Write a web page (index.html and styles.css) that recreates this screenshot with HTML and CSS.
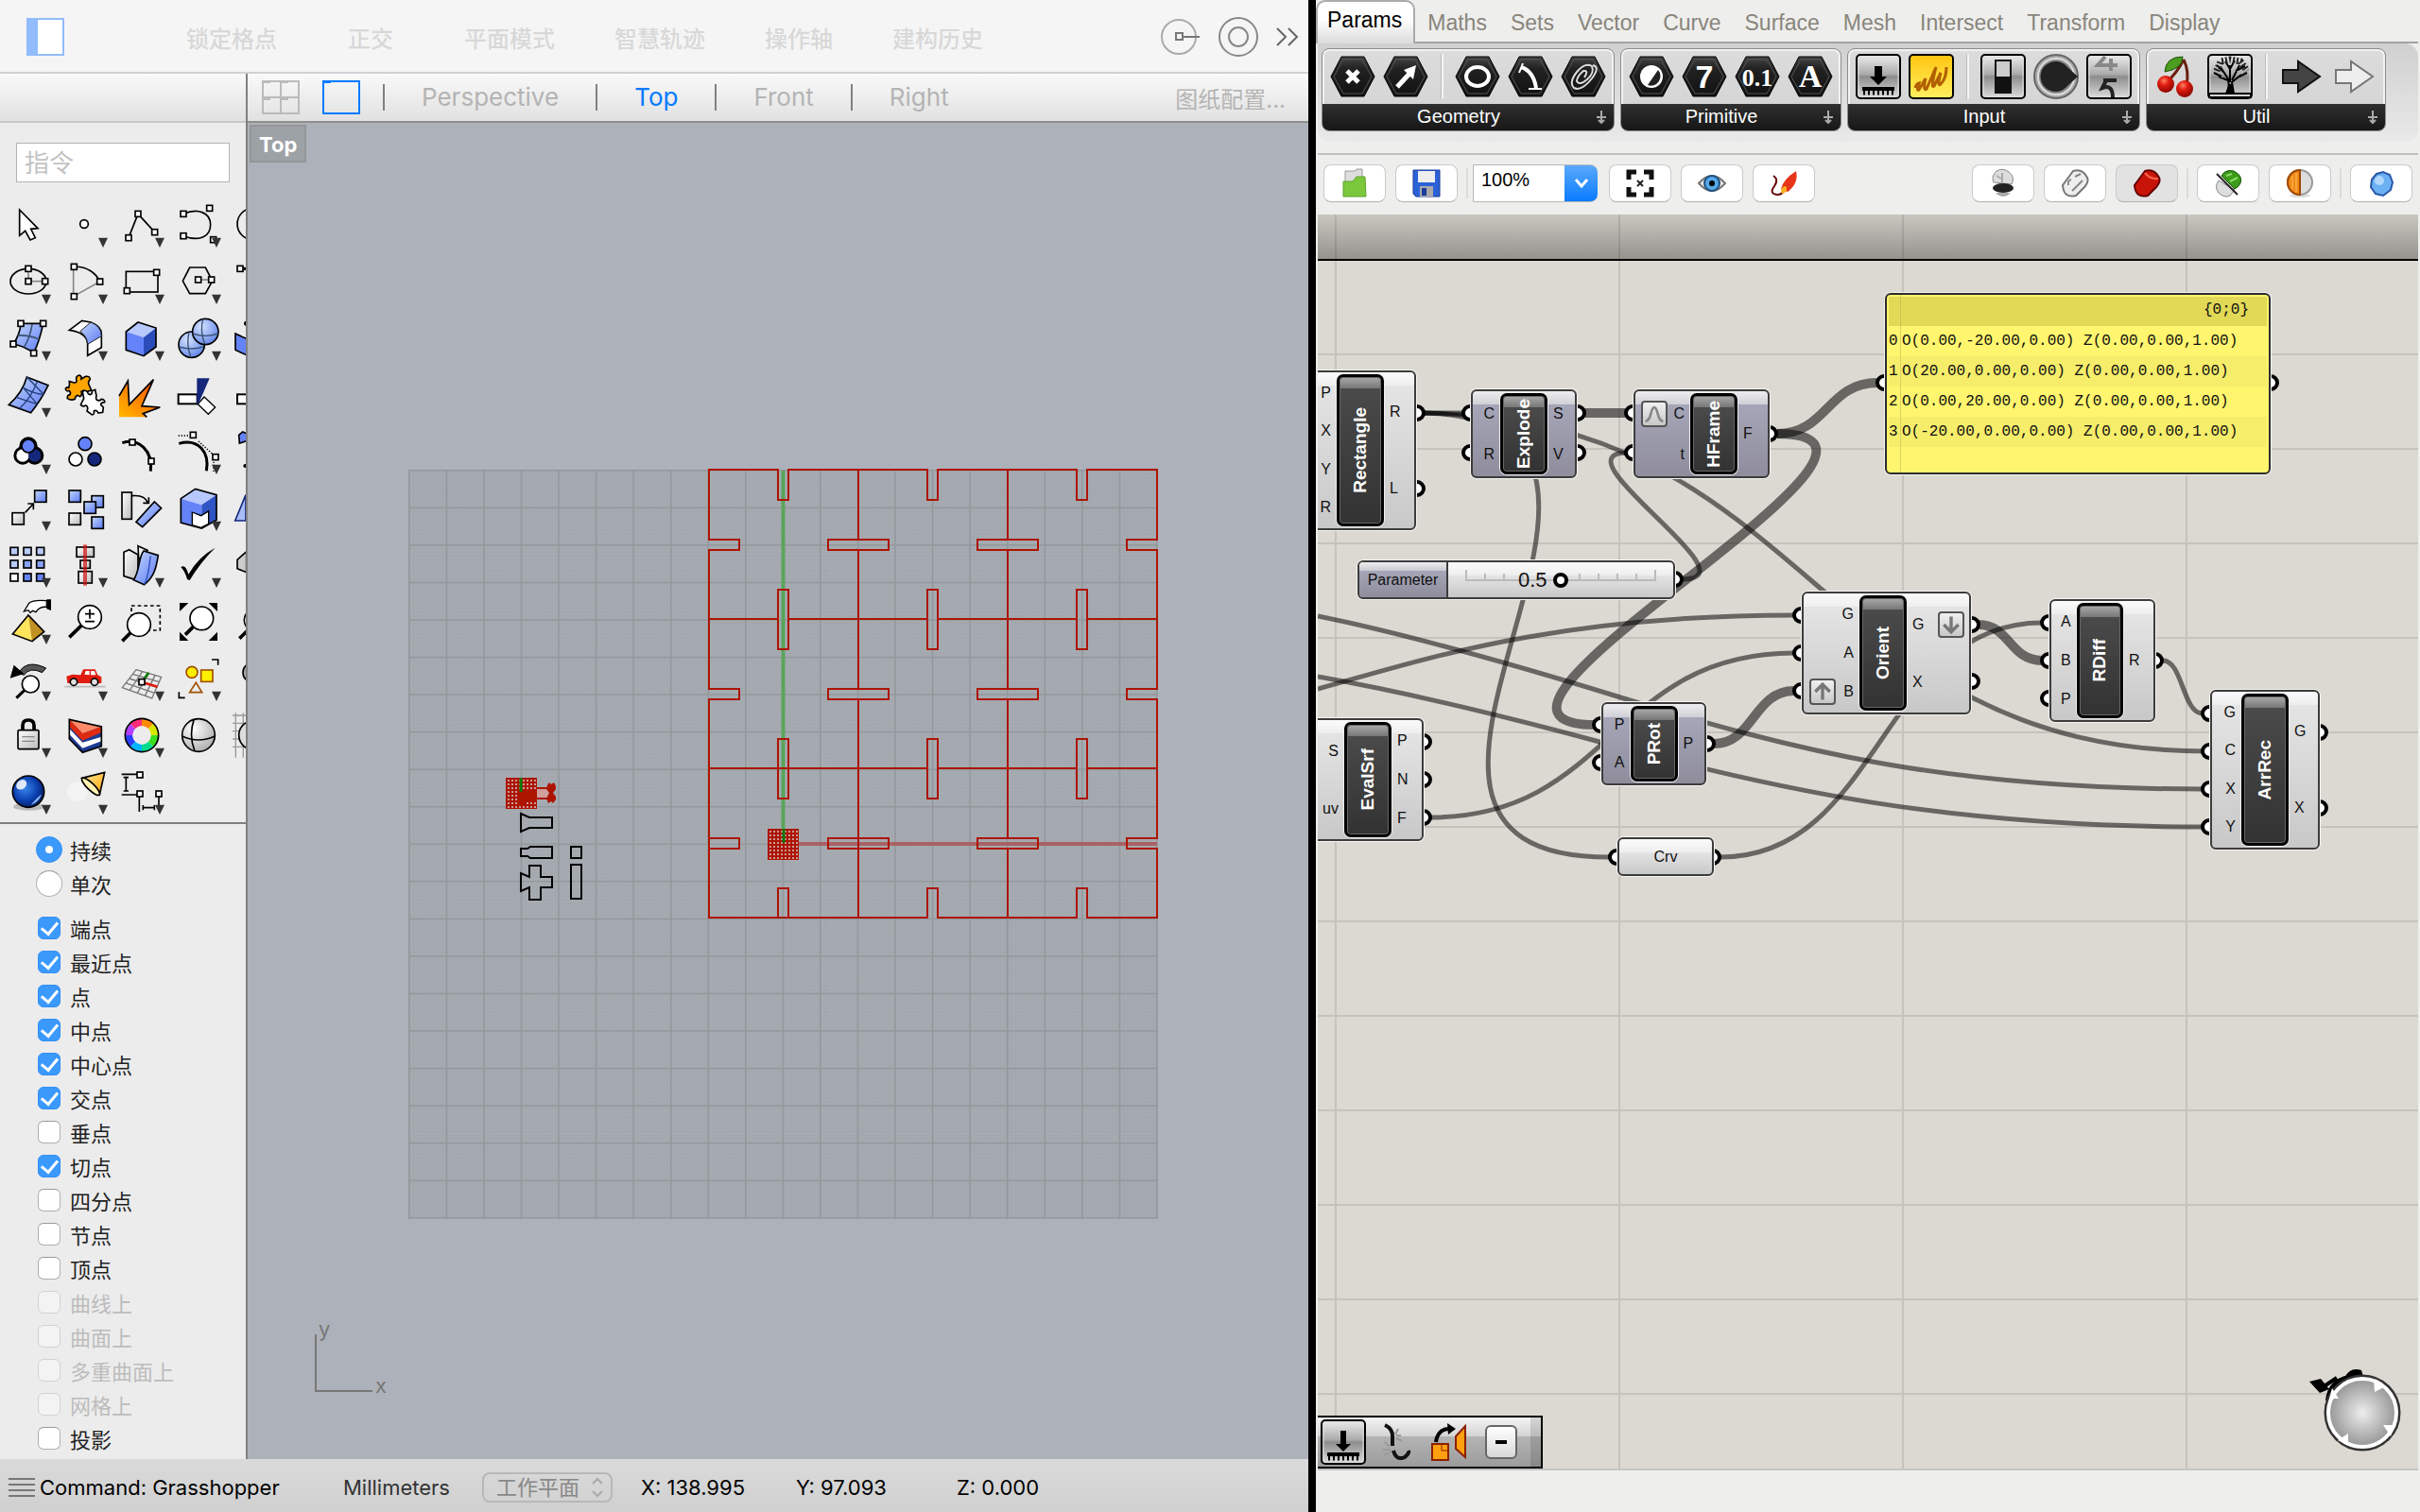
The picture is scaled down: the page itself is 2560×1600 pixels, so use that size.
FILE: index.html
```html
<!DOCTYPE html>
<html lang="zh-CN">
<head>
    <meta charset="UTF-8">
    <meta name="viewport" content="width=device-width, initial-scale=1.0">
    <title>Rhino - Grasshopper</title>
    <link rel="stylesheet" href="styles.css">
</head>
<body>
    <!-- shared shapes -->
    <svg class="defs" width="0" height="0" aria-hidden="true">
        <defs>
            <symbol id="h" viewBox="0 0 22 22" overflow="visible"><rect x="2" y="2" width="18" height="18" fill="#fff" stroke="#000" stroke-width="5"/></symbol>
            <symbol id="drop" viewBox="0 0 180 180"><path d="M132 134H162L147 165Z" fill="#333"/></symbol>
            <linearGradient id="blue" x1="0" y1="0" x2="1" y2="1"><stop offset="0" stop-color="#c4d8fb"/><stop offset="1" stop-color="#5b79f6"/></linearGradient>
            <linearGradient id="grey" x1="0" y1="0" x2="1" y2="1"><stop offset="0" stop-color="#fff"/><stop offset="1" stop-color="#bbb"/></linearGradient>
            <linearGradient id="fire" x1="0" y1="1" x2="1" y2="0"><stop offset="0" stop-color="#ffb800"/><stop offset="1" stop-color="#ff4a00"/></linearGradient>
            <linearGradient id="gold" x1="0" y1="0" x2="1" y2="1"><stop offset="0" stop-color="#fff0a0"/><stop offset="1" stop-color="#ffa000"/></linearGradient>
            <radialGradient id="ball" cx=".35" cy=".3" r=".8"><stop offset="0" stop-color="#d5e3ff"/><stop offset="1" stop-color="#5a80e8"/></radialGradient>
            <radialGradient id="greyball" cx=".35" cy=".3" r=".8"><stop offset="0" stop-color="#fff"/><stop offset="1" stop-color="#a8a8a8"/></radialGradient>
            <radialGradient id="deepball" cx=".4" cy=".4" r=".65"><stop offset="0" stop-color="#3a86e8"/><stop offset=".6" stop-color="#0b3fb0"/><stop offset="1" stop-color="#061c60"/></radialGradient>
            <radialGradient id="cherry" cx=".4" cy=".3" r=".7"><stop offset="0" stop-color="#ff8060"/><stop offset=".4" stop-color="#e01c10"/><stop offset="1" stop-color="#8c0600"/></radialGradient>
            <linearGradient id="metal" x1="0" y1="0" x2="0" y2="1"><stop offset="0" stop-color="#eee"/><stop offset=".45" stop-color="#aaa"/><stop offset=".5" stop-color="#8c8c8c"/><stop offset="1" stop-color="#ddd"/></linearGradient>
            <linearGradient id="yellow" x1="0" y1="0" x2="0" y2="1"><stop offset="0" stop-color="#ffc410"/><stop offset="1" stop-color="#fff060"/></linearGradient>
            <linearGradient id="hexfill" x1="0" y1="0" x2="0" y2="1"><stop offset="0" stop-color="#444"/><stop offset=".3" stop-color="#222"/><stop offset="1" stop-color="#111"/></linearGradient>
            <radialGradient id="dial"><stop offset="0" stop-color="#eee"/><stop offset="1" stop-color="#8e8e8e"/></radialGradient>
            <symbol id="hex" viewBox="0 0 48 48"><path d="M1 24L12 3H36L47 24L36 45H12Z" fill="url(#hexfill)" stroke="#000" stroke-width="1"/><path d="M4 24L14 6H34L44 24L34 42H14Z" fill="none" stroke="#555" stroke-width="1"/></symbol>
            <symbol id="tile" viewBox="0 0 48 48"><rect x="1" y="1" width="46" height="46" rx="4" fill="url(#metal)" stroke="#000" stroke-width="2"/><rect x="3" y="3" width="42" height="42" rx="3" fill="none" stroke="#ddd" stroke-width="1"/></symbol>
            <pattern id="minor" x="433" y="497" width="3.955" height="3.955" patternUnits="userSpaceOnUse"><path d="M0 .5H4M.5 0V4" stroke="#9ba0a4" stroke-width="1" opacity=".35"/></pattern>
            <pattern id="major" x="432" y="497" width="39.55" height="39.55" patternUnits="userSpaceOnUse"><path d="M0 .8H40M.8 0V40" stroke="#92979b" stroke-width="1.6"/></pattern>
            <pattern id="mesh" width="4" height="4" patternUnits="userSpaceOnUse"><path d="M0 1H4M1 0V4" stroke="#ad1400" stroke-width="2"/></pattern>
            <pattern id="paper" x="1412" y="274" width="300" height="100" patternUnits="userSpaceOnUse"><path d="M0 1H300M1 0V100" stroke="#000" stroke-opacity=".1" stroke-width="2"/></pattern>
        </defs>
    </svg>

    <!-- Rhino -->
    <main class="rhino">
        <header class="toolbar">
            <button class="panel-toggle" aria-label="侧边栏">
                <svg width="40" height="40" viewBox="0 0 40 40"><rect x="1" y="1" width="38" height="38" fill="#fff" stroke="#92bcfb" stroke-width="2"/><rect width="12" height="40" fill="#92bcfb"/></svg>
            </button>
            <div class="toggles">
                <button>锁定格点</button>
                <button class="short">正交</button>
                <button>平面模式</button>
                <button>智慧轨迹</button>
                <button>操作轴</button>
                <button>建构历史</button>
            </div>
            <div class="toolbar-icons">
                <button aria-label="记录">
                    <svg width="42" height="42" viewBox="0 0 42 42" fill="none"><circle cx="19" cy="21" r="18" stroke="#aaa" stroke-width="2"/><rect x="16" y="17" width="7" height="7" stroke="#777" stroke-width="2"/><path d="M23 21H41" stroke="#777" stroke-width="2"/></svg>
                </button>
                <button aria-label="目标">
                    <svg width="42" height="42" viewBox="0 0 42 42" fill="none" stroke="#888" stroke-width="2"><circle cx="21" cy="21" r="20"/><circle cx="21" cy="21" r="10"/></svg>
                </button>
                <button aria-label="更多">
                    <svg width="24" height="42" viewBox="0 0 24 42" fill="none" stroke="#666" stroke-width="2"><path d="M1 12L10 21L1 30M13 12L22 21L13 30"/></svg>
                </button>
            </div>
        </header>

        <div class="work">
            <aside class="sidebar">
                <div class="sidebar-head"></div>
                <input class="command" type="text" placeholder="指令" aria-label="指令">

                <div class="tools">
                    <button aria-label="选取"><svg viewBox="0 0 180 180"><path d="M62 45V127L80 112L96 141L112 134L98 106L120 104Z" fill="#fff" stroke="#000" stroke-width="5"/></svg></button>
                    <button aria-label="点"><svg viewBox="0 0 180 180"><circle cx="87" cy="90" r="13" fill="#fff" stroke="#000" stroke-width="5"/><use href="#drop"/></svg></button>
                    <button aria-label="多重直线"><svg viewBox="0 0 180 180"><path d="M48 134L78 58L131 116" class="ln"/><use href="#h" x="37" y="123" width="22" height="22"/><use href="#h" x="67" y="47" width="22" height="22"/><use href="#h" x="120" y="105" width="22" height="22"/><use href="#drop"/></svg></button>
                    <button aria-label="曲线"><svg viewBox="0 0 180 180"><path d="M42 58C90 38 128 55 128 92S95 148 42 128" class="ln"/><use href="#h" x="31" y="47" width="22" height="22"/><use href="#h" x="31" y="117" width="22" height="22"/><use href="#h" x="114" y="29" width="22" height="22"/><use href="#h" x="126" y="129" width="22" height="22"/><use href="#drop"/></svg></button>
                    <button aria-label="圆"><svg viewBox="0 0 180 180"><circle cx="83" cy="90" r="50" class="ln"/></svg></button>

                    <button aria-label="椭圆"><svg viewBox="0 0 180 180"><path d="M90 52V92H143" stroke="#888" stroke-width="5" fill="none"/><ellipse cx="90" cy="92" rx="57" ry="40" class="ln"/><use href="#h" x="79" y="41" width="22" height="22"/><use href="#h" x="79" y="81" width="22" height="22"/><use href="#h" x="132" y="81" width="22" height="22"/><use href="#drop"/></svg></button>
                    <button aria-label="圆弧"><svg viewBox="0 0 180 180"><path d="M53 46V140L137 93" stroke="#888" stroke-width="5" fill="none"/><path d="M55 46C95 44 125 65 137 93" class="ln"/><use href="#h" x="44" y="35" width="22" height="22"/><use href="#h" x="126" y="82" width="22" height="22"/><use href="#h" x="44" y="129" width="22" height="22"/><use href="#drop"/></svg></button>
                    <button aria-label="矩形"><svg viewBox="0 0 180 180"><rect x="40" y="61" width="101" height="65" class="ln"/><use href="#h" x="126" y="53" width="22" height="22"/><use href="#h" x="32" y="111" width="22" height="22"/><use href="#drop"/></svg></button>
                    <button aria-label="多边形"><svg viewBox="0 0 180 180"><path d="M89 87H131" stroke="#888" stroke-width="5"/><path d="M40 91L62 48H112L134 91L112 131H62Z" class="ln"/><use href="#h" x="78" y="76" width="22" height="22"/><use href="#h" x="120" y="76" width="22" height="22"/><use href="#drop"/></svg></button>
                    <button aria-label="圆角"><svg viewBox="0 0 180 180"><path d="M42 52H80" stroke="#000" stroke-width="9"/><use href="#h" x="31" y="41" width="22" height="22"/></svg></button>

                    <button aria-label="曲面"><svg viewBox="0 0 180 180"><path d="M66 46H137Q126 100 107 140Q78 118 42 111Q64 80 66 46Z" fill="url(#blue)" stroke="#000" stroke-width="5"/><path d="M102 48Q96 90 76 122M56 84Q90 82 124 96" stroke="#3c5272" stroke-width="5" fill="none"/><use href="#h" x="55" y="35" width="22" height="22"/><use href="#h" x="126" y="35" width="22" height="22"/><use href="#h" x="31" y="100" width="22" height="22"/><use href="#h" x="96" y="129" width="22" height="22"/><use href="#drop"/></svg></button>
                    <button aria-label="曲面圆角"><svg viewBox="0 0 180 180"><path d="M40 67L80 37L108 42Q142 55 142 80V122L98 148V110Q96 75 40 67Z" fill="#fff" stroke="#000" stroke-width="5"/><path d="M74 71L108 42Q142 55 142 86L98 112Q96 84 74 71Z" fill="url(#blue)" stroke="#222" stroke-width="3"/><use href="#drop"/></svg></button>
                    <button aria-label="立方体"><svg viewBox="0 0 180 180"><path d="M40 72L78 42L135 60L96 90Z" fill="#b7c9fc"/><path d="M40 72L96 90V149L40 130Z" fill="#6583f8"/><path d="M135 60L96 90V149L135 120Z" fill="#2a4dba"/><path d="M40 72L78 42L135 60V120L96 149L40 130Z" class="ln"/><use href="#drop"/></svg></button>
                    <button aria-label="布尔运算"><svg viewBox="0 0 180 180"><circle cx="68" cy="113" r="41" fill="url(#ball)" stroke="#000" stroke-width="5"/><path d="M28 120Q68 132 104 120M60 73Q50 113 66 153" stroke="#3c5272" stroke-width="4" fill="none"/><circle cx="112" cy="72" r="41" fill="url(#ball)" stroke="#000" stroke-width="5"/><path d="M72 78Q112 92 152 78M104 32Q94 72 110 112" stroke="#3c5272" stroke-width="4" fill="none"/><use href="#drop"/></svg></button>
                    <button aria-label="投影曲线"><svg viewBox="0 0 180 180"><path d="M27 78L70 98V150L27 130Z" fill="#6583f8" stroke="#000" stroke-width="5"/><circle cx="62" cy="46" r="8"/></svg></button>

                    <button aria-label="网格"><svg viewBox="0 0 180 180"><path d="M85 36L153 62Q130 110 98 149L28 124Q72 85 85 36Z" fill="url(#blue)" stroke="#000" stroke-width="5"/><path d="M118 50Q100 100 62 136M74 70Q105 88 140 92M52 100Q80 110 118 122M85 36L140 92M74 70L118 122" stroke="#25407c" stroke-width="4" fill="none"/><use href="#drop"/></svg></button>
                    <button aria-label="组合"><svg viewBox="0 0 180 180"><path d="M82 84Q88 74 98 78Q96 90 106 92Q114 90 112 80L122 76L126 96Q122 106 130 110Q138 112 142 106Q154 108 152 116Q140 116 140 124L148 132L146 148L132 150Q126 138 118 144Q120 156 112 156L96 144Q102 130 92 126Q82 132 76 124L86 104Z" fill="#fff" stroke="#000" stroke-width="5"/><path d="M40 50L56 54Q66 54 62 44Q60 32 72 30Q80 32 78 42L92 34Q106 32 106 44Q98 50 102 60L110 78L96 82Q86 74 78 82Q82 94 74 98L66 94Q58 98 58 106Q46 112 34 104Q32 94 42 92Q46 86 40 80Q28 82 28 72Q34 66 38 70Q42 60 40 50Z" fill="#ffa500" stroke="#000" stroke-width="5"/></svg></button>
                    <button aria-label="炸开"><svg viewBox="0 0 180 180"><path d="M18 96L46 48L50 124L127 44L90 128L148 132L94 152L106 163H18Z" fill="url(#fire)"/><path d="M18 96L46 48L50 124L127 44L90 128L148 132L94 152L106 163" class="ln"/></svg></button>
                    <button aria-label="修剪"><svg viewBox="0 0 180 180"><rect x="26" y="91" width="60" height="30" fill="#fff" stroke="#000" stroke-width="6"/><path d="M88 122L108 99L143 132L121 154Z" fill="#fff" stroke="#000" stroke-width="4"/><path d="M85 40H125L90 121H85Z" fill="#14277a"/></svg></button>
                    <button aria-label="分割"><svg viewBox="0 0 180 180"><rect x="33" y="91" width="60" height="30" fill="#fff" stroke="#000" stroke-width="6"/></svg></button>

                    <button aria-label="群组"><svg viewBox="0 0 180 180" stroke="#000"><g stroke-width="18"><circle cx="90" cy="75" r="20"/><circle cx="72" cy="105" r="20"/><circle cx="110" cy="105" r="20"/></g><g stroke="none"><circle cx="72" cy="105" r="20" fill="#fff"/><circle cx="110" cy="105" r="20" fill="#14277a"/></g><circle cx="90" cy="75" r="21" fill="#6583f8" stroke-width="5"/><use href="#drop" stroke="none"/></svg></button>
                    <button aria-label="解散群组"><svg viewBox="0 0 180 180" stroke="#000" stroke-width="5"><circle cx="90" cy="68" r="21" fill="#6583f8"/><circle cx="60" cy="117" r="21" fill="#fff"/><circle cx="120" cy="117" r="21" fill="#14277a"/></svg></button>
                    <button aria-label="编辑点"><svg viewBox="0 0 180 180"><path d="M28 65C80 48 126 90 118 155" fill="none" stroke="#000" stroke-width="9"/><use href="#h" x="49" y="52" width="22" height="22"/><use href="#h" x="109" y="112" width="22" height="22"/></svg></button>
                    <button aria-label="控制点"><svg viewBox="0 0 180 180"><path d="M28 67C90 50 126 95 115 154" fill="none" stroke="#000" stroke-width="9"/><path d="M26 42H62M90 60L134 100M138 125V158" stroke="#000" stroke-width="4" stroke-dasharray="4 5"/><use href="#h" x="62" y="29" width="22" height="22"/><use href="#h" x="133" y="99" width="22" height="22"/><use href="#drop"/></svg></button>
                    <button aria-label="变形"><svg viewBox="0 0 180 180"><path d="M38 40L50 30L64 36V58L40 66Z" fill="#6583f8" stroke="#000" stroke-width="5"/><circle cx="58" cy="138" r="6"/></svg></button>

                    <button aria-label="移动"><svg viewBox="0 0 180 180"><rect x="110" y="36" width="37" height="37" fill="url(#blue)" stroke="#000" stroke-width="5"/><rect x="39" y="107" width="37" height="37" fill="url(#grey)" stroke="#000" stroke-width="5"/><path d="M80 106L106 78M88 78H106V97" class="ln"/><use href="#drop"/></svg></button>
                    <button aria-label="复制"><svg viewBox="0 0 180 180" stroke="#000" stroke-width="5"><rect x="39" y="36" width="37" height="37" fill="url(#blue)"/><rect x="111" y="53" width="37" height="37" fill="url(#blue)"/><rect x="87" y="72" width="37" height="37" fill="url(#blue)"/><rect x="39" y="108" width="37" height="37" fill="url(#grey)"/><rect x="111" y="120" width="37" height="37" fill="url(#blue)"/></svg></button>
                    <button aria-label="旋转"><svg viewBox="0 0 180 180"><rect x="27" y="42" width="31" height="85" fill="url(#grey)" stroke="#000" stroke-width="5"/><path d="M60 53C88 50 104 62 110 76M94 76H112V58" class="ln"/><path d="M72 136L130 72L152 92L92 152Z" fill="url(#blue)" stroke="#000" stroke-width="5"/></svg></button>
                    <button aria-label="实体编辑"><svg viewBox="0 0 180 180"><path d="M34 62L80 31L147 50L100 82Z" fill="#b7c9fc"/><path d="M34 62L100 82V156L34 138Z" fill="#6583f8"/><path d="M147 50L100 82V156L147 130Z" fill="#2f55c4"/><path d="M34 62L80 31L147 50V130L100 156L34 138Z" class="ln"/><path d="M70 105L98 116L122 102V142L98 154L70 146Z" fill="#fff" stroke="#000" stroke-width="4"/><use href="#drop"/></svg></button>
                    <button aria-label="镜像"><svg viewBox="0 0 180 180"><path d="M26 132L60 50V132Z" fill="#a8bcf8" stroke="#14277a" stroke-width="5"/></svg></button>

                    <button aria-label="阵列"><svg viewBox="0 0 180 180" stroke="#000" stroke-width="5" fill="#b9cbfb"><rect x="33" y="37" width="24" height="24"/><rect x="75" y="37" width="24" height="24"/><rect x="116" y="37" width="24" height="24"/><rect x="33" y="78" width="24" height="24"/><rect x="75" y="78" width="24" height="24" fill="#86a2f8"/><rect x="116" y="78" width="24" height="24" fill="#86a2f8"/><rect x="33" y="120" width="24" height="24" fill="#fff"/><rect x="75" y="120" width="24" height="24" fill="#6583f8"/><rect x="116" y="120" width="24" height="24" fill="#6583f8"/><use href="#drop" stroke="none"/></svg></button>
                    <button aria-label="对齐"><svg viewBox="0 0 180 180"><g fill="url(#grey)" stroke="#000" stroke-width="5"><rect x="63" y="36" width="55" height="31"/><rect x="75" y="78" width="31" height="25"/><rect x="69" y="113" width="43" height="37"/></g><path d="M90 28V158" stroke="#d01010" stroke-width="12" opacity=".7"/><use href="#drop"/></svg></button>
                    <button aria-label="扭转"><svg viewBox="0 0 180 180" stroke="#000" stroke-width="5"><path d="M78 32L108 46L80 75Z" fill="#eee"/><path d="M33 52L50 44L78 60V142L33 128Z" fill="url(#grey)"/><path d="M64 140C85 110 78 70 96 48L142 62C136 100 130 130 98 155Z" fill="url(#blue)"/><path d="M118 64C112 105 110 135 98 154" stroke="#2a4dba" stroke-width="4" fill="none"/><use href="#drop" stroke="none"/></svg></button>
                    <button aria-label="确认"><svg viewBox="0 0 180 180"><path d="M34 100Q48 88 58 122Q90 66 143 38Q96 84 62 141L54 138Q46 110 34 100Z"/><use href="#drop"/></svg></button>
                    <button aria-label="方块"><svg viewBox="0 0 180 180"><path d="M33 76L62 50V116L33 104Z" fill="#ccc" stroke="#000" stroke-width="5"/></svg></button>

                    <button aria-label="分析"><svg viewBox="0 0 180 180"><path d="M40 132L90 72L102 155Z" fill="#ffe45c"/><path d="M90 72L140 124L102 155Z" fill="#c09020"/><path d="M40 132L90 72L140 124L102 155Z" class="ln"/><path d="M76 60L92 34Q106 22 148 26V46Q125 44 114 62L104 58L96 64L90 56Z" fill="#fff" stroke="#000" stroke-width="4"/><path d="M148 22H162V57L148 52Z"/><use href="#drop"/></svg></button>
                    <button aria-label="缩放"><svg viewBox="0 0 180 180"><path d="M80 103L40 142" stroke="#000" stroke-width="11"/><circle cx="105" cy="78" r="37" fill="#fff" stroke="#000" stroke-width="5"/><path d="M90 68H120M105 53V83M90 92H120" stroke="#000" stroke-width="5"/></svg></button>
                    <button aria-label="窗口缩放"><svg viewBox="0 0 180 180"><rect x="57" y="42" width="91" height="78" fill="none" stroke="#000" stroke-width="5" stroke-dasharray="11 9"/><path d="M56 126L28 154" stroke="#000" stroke-width="11"/><circle cx="81" cy="102" r="37" fill="#fff" stroke="#000" stroke-width="5"/></svg></button>
                    <button aria-label="全部缩放"><svg viewBox="0 0 180 180"><path d="M76 106L48 134" stroke="#000" stroke-width="11"/><circle cx="100" cy="82" r="37" fill="#fff" stroke="#000" stroke-width="5"/><path d="M30 33H58L30 60ZM150 33H122L150 60ZM30 153V125L58 153ZM150 153V125L122 153Z"/></svg></button>
                    <button aria-label="缩放选取"><svg viewBox="0 0 180 180"><path d="M64 122L40 146" stroke="#000" stroke-width="11"/><circle cx="92" cy="88" r="37" fill="#fff" stroke="#000" stroke-width="5"/></svg></button>

                    <button aria-label="复原视图"><svg viewBox="0 0 180 180"><path d="M58 76Q85 30 146 60L134 74Q95 55 76 82Z" fill="#555" stroke="#000" stroke-width="3"/><path d="M32 92L44 50L76 78Z"/><path d="M80 128L52 155" stroke="#000" stroke-width="9"/><circle cx="97" cy="111" r="27" fill="#fff" stroke="#000" stroke-width="5"/><use href="#drop"/></svg></button>
                    <button aria-label="视图"><svg viewBox="0 0 180 180"><path d="M25 119H155" stroke="#bbb" stroke-width="5"/><path d="M31 86L50 80L76 82L84 64H122L130 82L142 88V108H34Z" fill="#e01c10"/><path d="M88 80L92 69H104V82ZM108 69H120L124 82H108Z" fill="#fff"/><circle cx="54" cy="104" r="11" fill="#ddd" stroke="#000" stroke-width="5"/><circle cx="120" cy="104" r="11" fill="#ddd" stroke="#000" stroke-width="5"/><use href="#drop"/></svg></button>
                    <button aria-label="工作平面"><svg viewBox="0 0 180 180"><path d="M72 65L152 88L122 156L28 122ZM61 79L145 104M50 93L138 121M38 107L130 139M92 71L52 130M112 77L76 139M132 83L100 148" fill="none" stroke="#777" stroke-width="4"/><path d="M90 104L112 74" stroke="#0a7a0a" stroke-width="8"/><path d="M90 104L140 119" stroke="#e01c10" stroke-width="8"/><use href="#h" x="79" y="93" width="22" height="22"/><use href="#drop"/></svg></button>
                    <button aria-label="选取工具"><svg viewBox="0 0 180 180"><g stroke="#a05000" stroke-width="5"><circle cx="69" cy="73" r="18" fill="#ffee00"/><rect x="98" y="66" width="37" height="37" fill="#ffee00"/><path d="M62 137L82 106L101 137Z" fill="none"/></g><path d="M132 33H152V50M28 136V154H47" class="ln"/><use href="#drop"/></svg></button>
                    <button aria-label="显示"><svg viewBox="0 0 180 180"><circle cx="82" cy="74" r="31" fill="#aaa" stroke="#000" stroke-width="5"/></svg></button>

                    <button aria-label="锁定"><svg viewBox="0 0 180 180"><path d="M72 78V62Q72 45 90 45T108 62V78" fill="none" stroke="#000" stroke-width="11"/><rect x="57" y="77" width="66" height="60" rx="4" fill="url(#grey)" stroke="#000" stroke-width="5"/><path d="M70 98H110M70 112H110" stroke="#888" stroke-width="4"/><use href="#drop"/></svg></button>
                    <button aria-label="图层"><svg viewBox="0 0 180 180"><path d="M40 43V105L82 148L142 128V66Z" fill="#1c3a90"/><path d="M40 72L82 116L142 98V112L82 134L40 90Z" fill="#fff"/><path d="M40 43L142 66Q115 75 82 88Z" fill="#ff8a6a"/><path d="M40 43L82 88Q115 75 142 66V84L82 110L40 66Z" fill="#e02a10"/><path d="M40 43L142 66V128L82 148L40 105Z" class="ln"/><use href="#drop"/></svg></button>
                    <button aria-label="颜色"><svg viewBox="0 0 180 180" fill="none"><g stroke-width="24"><path d="M90 52A41 41 0 0 1 119 64" stroke="#ff8a00"/><path d="M119 64A41 41 0 0 1 131 93" stroke="#d8e800"/><path d="M131 93A41 41 0 0 1 119 122" stroke="#3ce020"/><path d="M119 122A41 41 0 0 1 90 134" stroke="#00dc8c"/><path d="M90 134A41 41 0 0 1 61 122" stroke="#00b4ff"/><path d="M61 122A41 41 0 0 1 49 93" stroke="#2a40ff"/><path d="M49 93A41 41 0 0 1 61 64" stroke="#b43cff"/><path d="M61 64A41 41 0 0 1 90 52" stroke="#ff2a78"/></g><circle cx="90" cy="93" r="53" stroke="#000" stroke-width="5"/><circle cx="90" cy="93" r="29" fill="#ececec"/><use href="#drop"/></svg></button>
                    <button aria-label="着色"><svg viewBox="0 0 180 180"><circle cx="90" cy="93" r="52" fill="url(#greyball)" stroke="#000" stroke-width="5"/><path d="M38 96Q90 120 142 96M76 42Q58 92 78 144" class="ln"/></svg></button>
                    <button aria-label="线框"><svg viewBox="0 0 180 180"><path d="M18 30H66M18 55H66M18 80H66M18 105H66M18 130H66M28 22V164M52 22V164" stroke="#999" stroke-width="4"/><circle cx="84" cy="93" r="46" fill="#ddd" stroke="#000" stroke-width="5"/></svg></button>

                    <button aria-label="渲染"><svg viewBox="0 0 180 180"><ellipse cx="92" cy="140" rx="50" ry="12" fill="#bbb"/><circle cx="90" cy="92" r="50" fill="url(#deepball)" stroke="#000" stroke-width="5"/><ellipse cx="68" cy="70" rx="18" ry="14" fill="#fff" opacity=".85" transform="rotate(-40 68 70)"/><path d="M132 100Q124 126 98 134Q118 112 132 100Z" fill="#8ac0ff"/><use href="#drop"/></svg></button>
                    <button aria-label="灯光"><svg viewBox="0 0 180 180"><circle cx="66" cy="92" r="32" fill="#fff" opacity=".45"/><path d="M80 49L152 31L136 102Z" fill="url(#gold)" stroke="#000" stroke-width="5"/><ellipse cx="108" cy="76" rx="11" ry="38" fill="#fff3b0" stroke="#000" stroke-width="5" transform="rotate(-46 108 76)"/><use href="#drop"/></svg></button>
                    <button aria-label="尺寸标注"><svg viewBox="0 0 180 180"><path d="M26 37H84M26 102H84M40 47V90M32 47H48M32 90H48M82 102V156M144 102V150M94 143H130M94 135V151M130 135V151" class="ln"/><use href="#h" x="73" y="28" width="22" height="22"/><use href="#h" x="73" y="88" width="22" height="22"/><use href="#h" x="133" y="88" width="22" height="22"/><use href="#drop"/></svg></button>
                </div>

                <form class="snaps">
                    <label><input type="radio" name="mode" checked>持续</label>
                    <label><input type="radio" name="mode">单次</label>
                    <div class="snap-list">
                        <label><input type="checkbox" checked>端点</label>
                        <label><input type="checkbox" checked>最近点</label>
                        <label><input type="checkbox" checked>点</label>
                        <label><input type="checkbox" checked>中点</label>
                        <label><input type="checkbox" checked>中心点</label>
                        <label><input type="checkbox" checked>交点</label>
                        <label><input type="checkbox">垂点</label>
                        <label><input type="checkbox" checked>切点</label>
                        <label><input type="checkbox">四分点</label>
                        <label><input type="checkbox">节点</label>
                        <label><input type="checkbox">顶点</label>
                        <label class="off"><input type="checkbox" disabled>曲线上</label>
                        <label class="off"><input type="checkbox" disabled>曲面上</label>
                        <label class="off"><input type="checkbox" disabled>多重曲面上</label>
                        <label class="off"><input type="checkbox" disabled>网格上</label>
                        <label><input type="checkbox">投影</label>
                    </div>
                </form>
            </aside>

            <section class="view">
                <nav class="view-tabs">
                    <button class="layout-btn" aria-label="四视图"><svg width="40" height="36" viewBox="0 0 40 36"><path d="M1 1H39V35H1ZM20 1V35M1 18H39" fill="none" stroke="#bbb" stroke-width="2"/><path d="M1 1H9V3H1ZM20 1H28V3H20ZM1 18H9V21H1ZM20 18H28V21H20Z" fill="#bbb"/></svg></button>
                    <button class="layout-btn" aria-label="单视图"><svg width="40" height="36" viewBox="0 0 40 36"><path d="M1 1H39V35H1Z" fill="none" stroke="#007aff" stroke-width="2"/><path d="M1 1H9V3H1Z" fill="#007aff"/></svg></button>
                    <div class="tabs">
                        <button>Perspective</button>
                        <button class="active">Top</button>
                        <button>Front</button>
                        <button>Right</button>
                    </div>
                    <button class="layouts">图纸配置...</button>
                </nav>
                <div class="model">
                    <svg width="1122" height="1414" viewBox="262 130 1122 1414">
                        <rect x="433" y="497" width="791" height="792" fill="#a6abb2"/>
                        <rect x="433" y="497" width="791" height="792" fill="url(#minor)"/>
                        <rect x="432" y="497" width="793" height="793" fill="url(#major)"/>
                        <path d="M828.5 498V893" stroke="#5aa45c" stroke-width="4"/>
                        <path d="M828.5 893H1224" stroke="#a96264" stroke-width="4"/>
                        <g fill="none" stroke="#ad1400" stroke-width="2">
                            <g id="col">
                                <path id="panel" d="M750 497H823V529H834V497H908V571H876V582H908V655H834V624H823V655H750V582H782V571H750Z"/>
                                <use href="#panel" y="158"/>
                                <use href="#panel" y="316"/>
                            </g>
                            <use href="#col" x="158"/>
                            <use href="#col" x="316"/>
                            <rect x="750" y="813" width="158" height="158"/>
                        </g>
                        <!-- meshes at the origin and beside it -->
                        <g transform="translate(812 877)">
                            <rect width="33" height="33" fill="#c99a98"/>
                            <rect width="33" height="33" fill="url(#mesh)"/>
                            <path d="M17 0V15" stroke="#0b7a0b" stroke-width="3"/>
                        </g>
                        <g transform="translate(535 823)">
                            <rect width="33" height="33" fill="#c99a98"/>
                            <rect width="33" height="33" fill="url(#mesh)"/>
                            <path d="M12 14H33V26H20V29H12Z" fill="#ad1400"/>
                            <path d="M16 0V15" stroke="#0b7a0b" stroke-width="3"/>
                            <rect x="33" y="12" width="12" height="10" fill="#cfa09c"/>
                            <path d="M33 11H46M33 22H46" stroke="#ad1400" stroke-width="2"/>
                            <path d="M44 8L46 5L48 7L51 5L53 9V12L50 16L53 20V23L50 27L48 25L45 27L43 22L46 16L43 12Z" fill="#ad1400"/>
                        </g>
                        <g fill="none" stroke="#000" stroke-width="2">
                            <path d="M551 861L560 865H584V876H560L551 880Z"/>
                            <path d="M551 898H558L561 896H584V908H561L558 906H551Z"/>
                            <rect x="604" y="896" width="11" height="12"/>
                            <rect x="604" y="915" width="11" height="36"/>
                            <path d="M560 916H572V928H584V939H572V952H560V939L551 943V924L560 928Z"/>
                        </g>
                        <path d="M334 1412V1472H394" fill="none" stroke="#777" stroke-width="2"/>
                        <text x="337" y="1414">y</text>
                        <text x="397" y="1474">x</text>
                    </svg>
                    <span class="view-name">Top</span>
                </div>
            </section>
        </div>

        <footer class="status">
            <button class="menu" aria-label="菜单"><svg width="28" height="22" viewBox="0 0 28 22"><path d="M0 2H28M0 8H28M0 14H28M0 20H28" stroke="#777" stroke-width="2"/></svg></button>
            <span class="command-state">Command: Grasshopper</span>
            <span class="units">Millimeters</span>
            <span class="plane">
                <select aria-label="工作平面" disabled><option>工作平面</option></select>
                <svg width="14" height="22" viewBox="0 0 14 22" fill="none" stroke="#aaa" stroke-width="2"><path d="M2 7L7 2L12 7M2 15L7 20L12 15"/></svg>
            </span>
            <span class="coord cx">X: 138.995</span>
            <span class="coord cy">Y: 97.093</span>
            <span class="coord">Z: 0.000</span>
        </footer>
    </main>

    <!-- Grasshopper -->
    <section class="gh">
        <nav class="gh-tabs">
            <button class="active">Params</button>
            <button>Maths</button>
            <button>Sets</button>
            <button>Vector</button>
            <button>Curve</button>
            <button>Surface</button>
            <button>Mesh</button>
            <button>Intersect</button>
            <button>Transform</button>
            <button>Display</button>
        </nav>

        <div class="ribbon">
            <div class="group">
                <div class="icons">
                    <button aria-label="Point"><svg viewBox="0 0 48 48"><use href="#hex"/><path d="M18 18L30 30M30 18L18 30" stroke="#fff" stroke-width="5"/></svg></button>
                    <button aria-label="Vector"><svg viewBox="0 0 48 48"><use href="#hex"/><path d="M15 35L28 21" stroke="#fff" stroke-width="5"/><path d="M22 17L35 12L32 27Z" fill="#fff"/></svg></button>
                    <i></i>
                    <button aria-label="Circle"><svg viewBox="0 0 48 48"><use href="#hex"/><ellipse cx="24" cy="24" rx="12" ry="10" fill="none" stroke="#fff" stroke-width="4"/></svg></button>
                    <button aria-label="Arc"><svg viewBox="0 0 48 48"><use href="#hex"/><path d="M14 14Q27 18 30 36" fill="none" stroke="#fff" stroke-width="4"/><path d="M22 37H36M12 20L16 10" stroke="#fff" stroke-width="2"/></svg></button>
                    <button aria-label="Curve"><svg viewBox="0 0 48 48"><use href="#hex"/><path d="M34 12Q42 14 33 26Q22 40 14 36Q8 30 18 18Q26 9 33 13Q36 20 28 27Q20 34 17 29Q17 24 24 18Q30 17 25 25" fill="none" stroke="#ddd" stroke-width="2"/></svg></button>
                </div>
                <div class="caption"><span>Geometry</span><svg viewBox="0 0 14 14"><path d="M7 0V13M2 7H12M4 10L7 13L10 10" stroke="#aaa" stroke-width="2" fill="none"/></svg></div>
            </div>
            <div class="group">
                <div class="icons">
                    <button aria-label="Boolean"><svg viewBox="0 0 48 48"><use href="#hex"/><circle cx="24" cy="24" r="12" fill="#fff"/><path d="M31 17A10 10 0 0 1 20 33Z" fill="#222"/></svg></button>
                    <button aria-label="Integer"><svg viewBox="0 0 48 48"><use href="#hex"/><text x="24" y="36" class="glyph">7</text></svg></button>
                    <button aria-label="Number"><svg viewBox="0 0 48 48"><use href="#hex"/><text x="24" y="34" class="glyph small">0.1</text></svg></button>
                    <button aria-label="Text"><svg viewBox="0 0 48 48"><use href="#hex"/><text x="24" y="35" class="glyph serif">A</text></svg></button>
                </div>
                <div class="caption"><span>Primitive</span><svg viewBox="0 0 14 14"><path d="M7 0V13M2 7H12M4 10L7 13L10 10" stroke="#aaa" stroke-width="2" fill="none"/></svg></div>
            </div>
            <div class="group">
                <div class="icons">
                    <button aria-label="Import"><svg viewBox="0 0 48 48"><use href="#tile"/><path d="M20 13H28V24H33L24 33L15 24H20Z"/><path d="M7 35H41V39H7Z"/><path d="M8 41H41" stroke="#000" stroke-width="5" stroke-dasharray="2 3"/></svg></button>
                    <button aria-label="Graph"><svg viewBox="0 0 48 48"><rect x="1" y="1" width="46" height="46" rx="4" fill="url(#yellow)" stroke="#000" stroke-width="2"/><path d="M7 36Q8 32 11 31Q8 40 11 38L18 26Q15 40 19 37L29 14Q23 38 27 34L34 20Q30 36 34 32Q40 26 40 14" fill="none" stroke="#b06000" stroke-width="3"/></svg></button>
                    <i></i>
                    <button aria-label="Button"><svg viewBox="0 0 48 48"><use href="#tile"/><rect x="15" y="6" width="18" height="36" fill="#111"/><rect x="17" y="8" width="14" height="16" fill="#ccc"/></svg></button>
                    <button aria-label="Knob"><svg viewBox="0 0 48 48"><circle cx="24" cy="24" r="23" fill="#aaa" stroke="#666" stroke-width="2"/><circle cx="24" cy="24" r="19" fill="#888" stroke="#ddd" stroke-width="2"/><path d="M36 14L47 24L36 34A16 16 0 1 1 36 14Z" fill="#222"/></svg></button>
                    <button aria-label="Digit Scroller"><svg viewBox="0 0 48 48"><use href="#tile"/><path d="M20 3L12 12H33M26 5V18" stroke="#888" stroke-width="4" fill="none"/><path d="M18 28H32M21 28L17 36Q28 32 28 46" stroke="#222" stroke-width="4" fill="none"/></svg></button>
                </div>
                <div class="caption"><span>Input</span><svg viewBox="0 0 14 14"><path d="M7 0V13M2 7H12M4 10L7 13L10 10" stroke="#aaa" stroke-width="2" fill="none"/></svg></div>
            </div>
            <div class="group">
                <div class="icons">
                    <button aria-label="Cherry Picker"><svg viewBox="0 0 48 48"><path d="M31 6Q24 20 13 30M31 6Q37 18 34 34" stroke="#6a2010" stroke-width="3" fill="none"/><path d="M11 19Q12 3 30 3Q30 16 11 19Z" fill="#4c9c20" stroke="#1c5008"/><circle cx="12" cy="32" r="9" fill="url(#cherry)"/><circle cx="32" cy="37" r="9" fill="url(#cherry)"/></svg></button>
                    <button aria-label="Param Viewer"><svg viewBox="0 0 48 48"><use href="#tile"/><path d="M2 42H46V46H2ZM20 42L23 34L22 28L12 24M28 42L26 30L36 22M24 30L24 12M23 28L14 14M26 28L34 12M15 24L7 20M34 24L42 20M18 20L10 12M30 18L40 13M24 16L19 8M24 16L29 7" stroke="#000" stroke-width="2" fill="none"/><path d="M20 43L22 32H26L29 43Z"/><path d="M10 18L14 8L24 6L35 8L42 18" stroke="#222" stroke-width="7" stroke-dasharray="2 2" fill="none"/></svg></button>
                    <i></i>
                    <button aria-label="Redirect"><svg viewBox="0 0 48 48"><path d="M4 17H20V8L43 24L20 40V31H4Z" fill="#444" stroke="#111" stroke-width="2"/></svg></button>
                    <button aria-label="Relay"><svg viewBox="0 0 48 48"><path d="M4 17H20V8L43 24L20 40V31H4Z" fill="#eee" stroke="#777" stroke-width="2"/></svg></button>
                </div>
                <div class="caption"><span>Util</span><svg viewBox="0 0 14 14"><path d="M7 0V13M2 7H12M4 10L7 13L10 10" stroke="#aaa" stroke-width="2" fill="none"/></svg></div>
            </div>
        </div>

        <div class="gh-bar">
            <button aria-label="Open"><svg viewBox="0 0 32 32"><path d="M6 3H16L18 1H24V15H6Z" fill="#ddd" stroke="#999"/><path d="M4 14H14L18 9H27L28 30H4Z" fill="#7cc83c" stroke="#5ca028"/></svg></button>
            <button aria-label="Save"><svg viewBox="0 0 32 32"><path d="M2 2H30V30H5L2 27Z" fill="#2c62d8" stroke="#1a3c98"/><rect x="7" y="3" width="18" height="12" fill="#eee"/><rect x="9" y="19" width="14" height="11" fill="#aaa"/><rect x="11" y="21" width="5" height="8" fill="#1a3c98"/></svg></button>
            <i></i>
            <span class="zoom">
                <select aria-label="Zoom"><option>100%</option></select>
                <svg width="16" height="10" viewBox="0 0 16 10"><path d="M2 1L8 8L14 1" fill="none" stroke="#fff" stroke-width="3"/></svg>
            </span>
            <button class="after-zoom" aria-label="Zoom extents"><svg viewBox="0 0 32 32"><path d="M4 12V4H12M20 4H28V12M28 20V28H20M12 28H4V20" fill="none" stroke="#111" stroke-width="5"/><path d="M13 13L19 19M19 13L13 19" stroke="#222" stroke-width="2"/></svg></button>
            <button aria-label="Named views"><svg viewBox="0 0 32 32"><path d="M2 16Q16 0 30 16Q16 32 2 16Z" fill="#e8e8e8" stroke="#777" stroke-width="2"/><circle cx="16" cy="16" r="8" fill="#58a8e8" stroke="#1c5080" stroke-width="2"/><circle cx="16" cy="16" r="3"/></svg></button>
            <button aria-label="Sketch"><svg viewBox="0 0 32 32"><path d="M5 8Q11 12 6 19Q0 27 9 28Q14 28 16 24" fill="none" stroke="#600" stroke-width="2"/><path d="M13 22Q15 12 29 3Q32 16 20 25Z" fill="#e83418"/><path d="M13 23Q16 17 19 20Q20 26 14 27Z" fill="#ffb020"/></svg></button>
            <span class="spacer"></span>
            <button aria-label="No preview"><svg viewBox="0 0 32 32"><path d="M6 15Q3 9 9 3Q16 -1 22 4Q29 9 25 17Z" fill="#ddd" stroke="#888"/><path d="M15 5V15M9 8L14 11" stroke="#aaa" stroke-width="2"/><ellipse cx="16" cy="21" rx="11" ry="5" fill="#222"/><path d="M8 26Q16 34 24 26Z" fill="#aaa"/></svg></button>
            <button aria-label="Wireframe"><svg viewBox="0 0 32 32"><path d="M3 18L14 3Q24 0 29 10Q31 14 26 20L17 29Q4 32 3 18Z" fill="#eee" stroke="#777" stroke-width="2"/><path d="M9 18Q8 13 12 12M16 9L22 6M13 24L24 13" stroke="#888" stroke-width="2" fill="none"/></svg></button>
            <button class="pressed" aria-label="Shaded"><svg viewBox="0 0 32 32"><path d="M3 18L14 3Q24 0 29 10Q31 14 26 20L17 29Q4 32 3 18Z" fill="#c81408" stroke="#600" stroke-width="2"/><path d="M14 5Q20 12 28 11" stroke="#f86050" stroke-width="2" fill="none"/></svg></button>
            <i></i>
            <button aria-label="Selected only"><svg viewBox="0 0 32 32"><path d="M6 13Q1 20 6 26Q12 32 18 29L23 23Z" fill="#ddd" stroke="#888"/><path d="M9 8Q13 1 22 3Q32 8 29 16Q27 20 23 22Z" fill="#3c9c18" stroke="#145008"/><path d="M14 8L20 6M18 14L26 10" stroke="#8cd868" stroke-width="2"/><path d="M4 6L26 28" stroke="#222" stroke-width="2"/></svg></button>
            <button aria-label="Mesh quality"><svg viewBox="0 0 32 32"><ellipse cx="16" cy="29" rx="11" ry="2" fill="#ddd"/><circle cx="16" cy="15" r="13" fill="#ddd" stroke="#999" stroke-width="2"/><path d="M16 2A13 13 0 0 0 16 28Z" fill="#f08a18" stroke="#a04800" stroke-width="2"/><path d="M8 8V22M12 5V25" stroke="#ffc060"/></svg></button>
            <i></i>
            <button aria-label="Settings"><svg viewBox="0 0 32 32"><path d="M6 12L11 6L18 4L25 7L28 15L26 23L18 29L10 27L5 20Z" fill="#6cb0f4" stroke="#2a58a8" stroke-width="2"/><circle cx="14" cy="13" r="5" fill="#b0d8fc"/></svg></button>
        </div>

        <div class="canvas">
            <svg class="wires" width="1164" height="1327" viewBox="1394 227 1164 1327">
                <rect x="1394" y="227" width="1164" height="1327" fill="url(#paper)"/>
                <g fill="none" stroke="#000" stroke-opacity=".53" stroke-width="5">
                    <path d="M1500 437H1556"/>
                    <path d="M1500 437C1918 437 1918 795 2336 795"/>
                    <path d="M1500 437C1834 437 1368 907 1702 907"/>
                    <path d="M1780 613C1860 613 1642 479 1722 479"/>
                    <path d="M1394 652C1494 672 1610 706 1711 737C1900 795 2060 835 2330 835"/>
                    <path d="M1394 716C1490 733 1592 758 1692 785C1880 836 2060 875 2330 875"/>
                    <path d="M1394 729C1500 700 1640 651 1898 651"/>
                    <path d="M1513 865C1705 865 1705 691 1898 691"/>
                    <path d="M1820 907C1990 907 1990 659 2160 659"/>
                    <path d="M2288 699C2309 699 2309 755 2330 755"/>
                    <g stroke-width="10">
                        <path d="M1676 437H1722"/>
                        <path d="M1880 459C1933 459 1933 405 1986 405"/>
                        <path d="M1880 459C2078 459 1490 767 1688 767"/>
                        <path d="M1813 787C1855 787 1855 731 1898 731"/>
                        <path d="M2093 661C2126 661 2126 699 2160 699"/>
                    </g>
                </g>
                <g fill="#fff" stroke="#000" stroke-width="4">
                    <circle cx="1499" cy="437" r="7"/><circle cx="1499" cy="517" r="7"/>
                    <circle cx="1555" cy="437" r="7"/><circle cx="1555" cy="479" r="7"/>
                    <circle cx="1669" cy="437" r="7"/><circle cx="1669" cy="479" r="7"/>
                    <circle cx="1727" cy="437" r="7"/><circle cx="1727" cy="479" r="7"/>
                    <circle cx="1872" cy="459" r="7"/>
                    <circle cx="1993" cy="405" r="7"/><circle cx="2402" cy="405" r="7"/>
                    <circle cx="1772" cy="613" r="7"/>
                    <circle cx="1693" cy="767" r="7"/><circle cx="1693" cy="807" r="7"/><circle cx="1806" cy="787" r="7"/>
                    <circle cx="1506" cy="785" r="7"/><circle cx="1506" cy="825" r="7"/><circle cx="1506" cy="865" r="7"/>
                    <circle cx="1710" cy="907" r="7"/><circle cx="1812" cy="907" r="7"/>
                    <circle cx="1905" cy="651" r="7"/><circle cx="1905" cy="691" r="7"/><circle cx="1905" cy="731" r="7"/>
                    <circle cx="2086" cy="661" r="7"/><circle cx="2086" cy="721" r="7"/>
                    <circle cx="2167" cy="659" r="7"/><circle cx="2167" cy="699" r="7"/><circle cx="2167" cy="739" r="7"/>
                    <circle cx="2280" cy="699" r="7"/>
                    <circle cx="2337" cy="755" r="7"/><circle cx="2337" cy="795" r="7"/><circle cx="2337" cy="835" r="7"/><circle cx="2337" cy="875" r="7"/>
                    <circle cx="2454" cy="775" r="7"/><circle cx="2454" cy="855" r="7"/>
                </g>
            </svg>

            <div class="node rectangle">
                <div class="ports in"><span>P</span><span>X</span><span>Y</span><span>R</span></div>
                <div class="name"><b>Rectangle</b></div>
                <div class="ports out"><span>R</span><span>L</span></div>
            </div>
            <div class="node dim explode">
                <div class="ports in"><span>C</span><span>R</span></div>
                <div class="name"><b>Explode</b></div>
                <div class="ports out"><span>S</span><span>V</span></div>
            </div>
            <div class="node dim hframe">
                <div class="ports in">
                    <span><svg class="flag" viewBox="0 0 28 28"><path d="M3 23C11 23 9 6 14 6S17 23 25 23" fill="none" stroke="#888" stroke-width="3"/></svg>C</span>
                    <span>t</span>
                </div>
                <div class="name"><b>HFrame</b></div>
                <div class="ports out"><span>F</span></div>
            </div>
            <div class="node slider">
                <label for="param">Parameter</label>
                <div class="track">
                    <svg width="202" height="14" viewBox="0 0 202 14"><path d="M1 1V12H201V1M21 5V12M41 5V12M61 5V12M81 5V12M101 5V12M121 5V12M141 5V12M161 5V12M181 5V12" fill="none" stroke="#bbb" stroke-width="2"/></svg>
                    <output for="param">0.5</output>
                    <input id="param" type="range" min="0" max="1" step="0.1" value="0.5">
                </div>
            </div>
            <div class="node prot dim">
                <div class="ports in"><span>P</span><span>A</span></div>
                <div class="name"><b>PRot</b></div>
                <div class="ports out"><span>P</span></div>
            </div>
            <div class="node evalsrf">
                <div class="ports in"><span>S</span><span>uv</span></div>
                <div class="name"><b>EvalSrf</b></div>
                <div class="ports out"><span>P</span><span>N</span><span>F</span></div>
            </div>
            <div class="node crv">Crv</div>
            <div class="node orient">
                <div class="ports in">
                    <span>G</span>
                    <span>A</span>
                    <span><svg class="flag" viewBox="0 0 28 28"><path d="M14 24V5M5 14L14 5L23 14" fill="none" stroke="#777" stroke-width="4"/></svg>B</span>
                </div>
                <div class="name"><b>Orient</b></div>
                <div class="ports out">
                    <span>G<svg class="flag" viewBox="0 0 28 28"><path d="M14 4V23M5 14L14 23L23 14" fill="none" stroke="#777" stroke-width="4"/></svg></span>
                    <span>X</span>
                </div>
            </div>
            <div class="node rdiff">
                <div class="ports in"><span>A</span><span>B</span><span>P</span></div>
                <div class="name"><b>RDiff</b></div>
                <div class="ports out"><span>R</span></div>
            </div>
            <div class="node arrrec">
                <div class="ports in"><span>G</span><span>C</span><span>X</span><span>Y</span></div>
                <div class="name"><b>ArrRec</b></div>
                <div class="ports out"><span>G</span><span>X</span></div>
            </div>

            <div class="data-panel">
                <div class="path">{0;0}</div>
                <ol>
                    <li><span>0</span>O(0.00,-20.00,0.00) Z(0.00,0.00,1.00)</li>
                    <li><span>1</span>O(20.00,0.00,0.00) Z(0.00,0.00,1.00)</li>
                    <li><span>2</span>O(0.00,20.00,0.00) Z(0.00,0.00,1.00)</li>
                    <li><span>3</span>O(-20.00,0.00,0.00) Z(0.00,0.00,1.00)</li>
                </ol>
            </div>

            <!-- recently used components -->
            <div class="recent">
                <button aria-label="Import"><svg width="48" height="48" viewBox="0 0 48 48"><use href="#tile"/><path d="M21 12H27V26H32L24 34L16 26H21Z"/><path d="M7 35H41V39H7Z"/><path d="M8 41H41" stroke="#000" stroke-width="5" stroke-dasharray="2 3"/></svg></button>
                <button aria-label="Disconnect"><svg width="40" height="44" viewBox="0 0 40 44"><path d="M6 4Q15 8 14 18V26M15 31Q18 42 27 38Q32 34 31 31" fill="none" stroke="#111" stroke-width="4"/><path d="M20 8L17 14M23 15H18M24 21L18 18M4 30H12M5 36L12 32M6 22L11 27" stroke="#999" stroke-width="2"/></svg></button>
                <button aria-label="Orient"><svg width="40" height="44" viewBox="0 0 40 44" stroke="#8c2000" stroke-width="2" fill="#ffa010"><rect x="2" y="24" width="17" height="17"/><path d="M27 16L37 5V38L27 29Z"/><path d="M12 25V31H18" fill="none" stroke-width="1"/><path d="M6 22Q8 8 20 8" fill="none" stroke="#000" stroke-width="4"/><path d="M18 2L27 8L19 14Z" fill="#000" stroke="none"/></svg></button>
                <button class="minus" aria-label="Collapse"><svg width="12" height="4" viewBox="0 0 12 4"><rect width="12" height="4"/></svg></button>
                <span class="edge"></span>
            </div>

            <div class="compass">
                <svg width="100" height="94" viewBox="2442 1446 100 94">
                    <path d="M2443 1462L2455 1459L2464 1470L2454 1474ZM2460 1482Q2462 1460 2484 1455L2488 1458Q2470 1466 2464 1482ZM2480 1458Q2486 1446 2498 1450L2500 1457Z"/>
                    <path d="M2460 1466L2472 1458" stroke="#000" stroke-width="4"/>
                    <circle cx="2499" cy="1495" r="39" fill="url(#dial)" stroke="#333" stroke-width="3"/>
                    <circle cx="2499" cy="1495" r="36" fill="none" stroke="#fff" stroke-width="4"/>
                    <path d="M2511 1460L2524 1467L2512 1473ZM2464 1480L2474 1480L2467 1469ZM2533 1508L2521 1508L2529 1520ZM2473 1524L2484 1517L2484 1530Z" fill="#fff"/>
                </svg>
            </div>
        </div>
        <div class="gh-status"></div>
    </section>
</body>
</html>
```
FILE: styles.css
```css
* {
    margin: 0;
    padding: 0;
    box-sizing: border-box;
}

body {
    display: flex;
    height: 100vh;
    overflow: hidden;
    background: #000;
    font-family: 'Inter', 'Noto Sans CJK SC', sans-serif;
    font-size: 24px;
    color: #222;
}

button,
select,
input {
    font: inherit;
    color: inherit;
    border: none;
    background: none;
}

svg {
    display: block;
}

.defs {
    position: absolute;
}

.ln {
    fill: none;
    stroke: #000;
    stroke-width: 5px;
}

/* Rhino window */
.rhino {
    flex: 1384 1 0;
    min-width: 0;
    display: flex;
    flex-direction: column;
    background: #ececec;
}

.toolbar {
    height: 78px;
    padding: 2px 10px 0 28px;
    display: flex;
    align-items: center;
    background: #f5f5f5;
    border-bottom: 2px solid #d2d2d2;
}

.toggles {
    flex: 1;
    margin-left: 129px;
    display: flex;
    gap: 63px;
    color: #d8d8d8;
    font-weight: 500;
}

.toggles .short {
    padding: 0 12px;
}

.toolbar-icons {
    display: flex;
    gap: 19px;
}

.work {
    flex: 1;
    min-height: 0;
    display: flex;
}

/* sidebar */
.sidebar {
    width: 262px;
    flex: none;
    overflow: hidden;
    border-right: 2px solid #808080;
}

.sidebar-head {
    height: 52px;
    background: linear-gradient(#fafafa, #e1e1e1);
    border-bottom: 2px solid #c8c8c8;
}

.command {
    display: block;
    width: 226px;
    height: 42px;
    margin: 21px 0 14px 17px;
    padding: 0 8px;
    background: #fff;
    border: 1px solid #b4b4b4;
    font-size: 26px;
}

.command::placeholder {
    color: #c2c2c2;
}

.tools {
    display: grid;
    grid-template-columns: repeat(5, 60px);
    grid-auto-rows: 60px;
    height: 663px;
}

.tools svg {
    width: 60px;
    height: 60px;
}

.snaps {
    border-top: 2px solid #808080;
    padding: 9px 0 0 38px;
    font-size: 22px;
}

.snaps label {
    height: 36px;
    display: flex;
    align-items: center;
    gap: 8px;
}

.snap-list {
    margin-top: 11px;
    padding-left: 2px;
}

.snap-list label {
    gap: 10px;
}

.snaps input {
    appearance: none;
    width: 24px;
    height: 24px;
    background: #fff;
    border: 1px solid #b0b0b0;
    border-top-color: #999;
    border-radius: 6px;
    display: grid;
    place-items: center;
}

.snaps input[type="radio"] {
    width: 28px;
    height: 28px;
    border-radius: 50%;
}

.snaps input:checked {
    background: #3b99fc;
    border-color: #3490f4;
}

.snaps input[type="radio"]:checked::after {
    content: '';
    width: 8px;
    height: 8px;
    border-radius: 50%;
    background: #fff;
}

.snaps input[type="checkbox"]:checked::after {
    content: '';
    width: 8px;
    height: 14px;
    margin-bottom: 4px;
    border: solid #fff;
    border-width: 0 3px 3px 0;
    transform: rotate(40deg);
}

.snaps .off {
    color: #bcbcbc;
}

.snaps .off input {
    background: #f3f3f3;
    border-color: #d2d2d2;
}

/* viewport */
.view {
    flex: 1;
    min-width: 0;
    display: flex;
    flex-direction: column;
}

.view-tabs {
    height: 52px;
    padding: 0 24px 0 15px;
    display: flex;
    align-items: center;
    gap: 24px;
    background: linear-gradient(#fafafa, #e1e1e1);
    border-bottom: 2px solid #8d8f8d;
    color: #b4b4b4;
}

.tabs {
    flex: 1;
    display: flex;
    font-size: 26px;
}

.tabs button {
    height: 28px;
    line-height: 28px;
    padding: 0 39px;
    border-left: 2px solid #808080;
}

.tabs .active {
    color: #007aff;
}

.model {
    flex: 1;
    min-height: 0;
    overflow: hidden;
    position: relative;
    background: #adb1b9;
}

.model text {
    font-size: 22px;
    fill: #777;
}

.view-name {
    position: absolute;
    left: 2px;
    top: 2px;
    height: 40px;
    padding: 0 8px;
    line-height: 38px;
    background: #9da2a6;
    border: 2px solid #929698;
    color: #fff;
    font-size: 22px;
    font-weight: 700;
}

/* status bar */
.status {
    height: 56px;
    padding: 4px 0 0 9px;
    display: flex;
    align-items: center;
    background: linear-gradient(#dadada, #d0d0d0);
    font-size: 22px;
    color: #000;
    white-space: nowrap;
}

.command-state {
    width: 321px;
    padding-left: 5px;
}

.units {
    width: 152px;
    padding-left: 5px;
    color: #333;
}

.plane {
    display: grid;
    margin-right: 30px;
    align-items: center;
}

.plane select,
.plane svg {
    grid-area: 1 / 1;
}

.plane svg {
    justify-self: end;
    margin-right: 9px;
    pointer-events: none;
}

.plane select {
    appearance: none;
    width: 138px;
    height: 32px;
    padding-left: 13px;
    border: 2px solid #b8b8b8;
    border-radius: 8px;
    color: #888;
    opacity: 1;
}

.cx {
    width: 164px;
}

.cy {
    width: 170px;
}

/* Grasshopper window */
.gh {
    flex: 1164 1 0;
    min-width: 0;
    margin-left: 8px;
    padding: 0 2px;
    display: flex;
    flex-direction: column;
    background: #eeeeec;
    font-family: 'Liberation Sans', Arial, sans-serif;
}

.gh-tabs {
    height: 46px;
    display: flex;
    gap: 1px;
    border-bottom: 2px solid #a2a2a2;
    font-size: 23px;
    color: #88857c;
}

.gh-tabs button {
    padding: 4px 12px 0;
}

.gh-tabs .active {
    height: 46px;
    padding: 0 12px 6px 10px;
    background: linear-gradient(#fff 40%, #dcdcdc);
    border: 2px solid #aaa;
    border-bottom: none;
    border-radius: 10px 10px 0 0;
    margin-left: -2px;
    color: #000;
}

.ribbon {
    height: 104px;
    padding: 5px 4px;
    display: flex;
    align-items: flex-start;
    gap: 6px;
    background: linear-gradient(#d0d0d0, #e9e9e9);
    border-radius: 0 14px 14px 14px;
}

.group {
    height: 88px;
    display: flex;
    flex-direction: column;
    background: linear-gradient(#dcdcdc, #d2d2d2);
    border: 1px solid #8c8c8c;
    border-radius: 8px;
    box-shadow: inset 0 0 0 2px #f2f2f2;
    overflow: hidden;
}

.icons {
    flex: 1;
    padding: 0 8px;
    display: flex;
    align-items: center;
    gap: 8px;
}

.icons svg {
    width: 48px;
    height: 48px;
}

.icons i {
    width: 12px;
    height: 48px;
    background: linear-gradient(90deg, transparent 5px, #bbb 5px 6px, #f4f4f4 6px 8px, transparent 8px);
}

.glyph {
    fill: #fff;
    font-size: 34px;
    font-weight: 700;
    text-anchor: middle;
}

.glyph.small {
    font-family: 'Liberation Serif', serif;
    font-size: 26px;
}

.glyph.serif {
    font-family: 'Liberation Serif', serif;
    font-size: 34px;
}

.caption {
    height: 28px;
    padding-right: 6px;
    display: flex;
    align-items: center;
    background: linear-gradient(#303030, #161616);
    color: #fff;
    font-size: 20px;
}

.caption span {
    flex: 1;
    text-align: center;
    padding-bottom: 2px;
}

.caption svg {
    width: 14px;
    height: 14px;
}

.gh-bar {
    height: 65px;
    margin-top: 12px;
    padding: 0 6px 4px;
    display: flex;
    align-items: center;
    gap: 10px;
    border-top: 2px solid #c0c0c0;
}

.gh-bar button {
    width: 66px;
    height: 40px;
    display: grid;
    place-items: center;
    background: #fff;
    border: 1px solid #cacaca;
    border-bottom-color: #b0b0b0;
    border-radius: 8px;
}

.gh-bar button svg {
    width: 32px;
    height: 32px;
}

.gh-bar .pressed {
    background: #e2e2e2;
}

.gh-bar .after-zoom {
    margin-left: 2px;
}

.gh-bar i {
    width: 2px;
    height: 32px;
    margin: 0 -1px;
    background: #dcdcdc;
}

.spacer {
    flex: 1;
}

.zoom {
    display: grid;
    align-items: center;
    margin-left: -4px;
}

.zoom select,
.zoom svg {
    grid-area: 1 / 1;
}

.zoom svg {
    justify-self: end;
    margin-right: 9px;
    pointer-events: none;
}

.zoom select {
    appearance: none;
    width: 132px;
    height: 40px;
    padding: 0 0 8px 8px;
    font-size: 20px;
    color: #000;
    background: linear-gradient(#5aa9fb, #0a7bff) right / 35px 100% no-repeat #fff;
    border: 1px solid #b8b8b8;
    border-right: none;
    border-radius: 0 8px 8px 0;
}

/* definition canvas */
.canvas {
    flex: 1;
    min-height: 0;
    position: relative;
    overflow: hidden;
    background: linear-gradient(#cac7c0, #94938d) top / 100% 47px no-repeat #dcd9d2;
}

.canvas::before {
    content: '';
    position: absolute;
    top: 47px;
    left: 0;
    right: 0;
    height: 2px;
    background: #000;
}

.wires {
    position: absolute;
    left: 0;
    top: 0;
}

.node {
    position: absolute;
    display: flex;
    padding: 2px 4px;
    background: linear-gradient(#fbfbfb, #eee 14px, #e4e4e4 14px, #c8c8c8);
    border: 2px solid #3c3c3c;
    border-radius: 6px;
    box-shadow: 0 0 0 1px #f4f4f2;
    font-size: 16px;
    color: #111;
}

.node.dim {
    background: linear-gradient(#eee, #cfd0d6 14px, #a5a6b8 14px, #8f8d9c);
}

.ports {
    flex: 1;
    display: flex;
    flex-direction: column;
}

.ports span {
    flex: 1;
    display: flex;
    align-items: center;
    padding: 0 6px;
}

.ports.in span {
    justify-content: flex-end;
}

.ports.out span {
    justify-content: space-between;
}

.flag {
    width: 28px;
    height: 28px;
    background: linear-gradient(#f0f0f0, #c8c8c8);
    border: 2px solid #555;
    border-radius: 4px;
}

.ports.in .flag {
    margin: 0 auto 0 -4px;
}

.ports.out .flag {
    margin-right: -5px;
}

.name {
    width: 50px;
    display: flex;
    align-items: center;
    justify-content: center;
    background: linear-gradient(#aaa, #777 12px, #4a4a4a 12px, #323232);
    border: 3px solid #000;
    border-radius: 7px;
    box-shadow: 0 0 0 1px #eee, inset 0 0 0 1px #666;
    color: #fff;
}

.name b {
    writing-mode: vertical-rl;
    transform: rotate(180deg);
    font-size: 19px;
}

.rectangle { left: -30px; top: 165px; width: 134px; height: 169px; }
.explode { left: 162px; top: 185px; width: 112px; height: 94px; }
.hframe { left: 334px; top: 185px; width: 144px; height: 94px; }
.slider { left: 42px; top: 366px; width: 336px; height: 41px; }
.prot { left: 300px; top: 516px; width: 111px; height: 88px; }
.evalsrf { left: -30px; top: 533px; width: 142px; height: 130px; }
.crv { left: 317px; top: 659px; width: 102px; height: 41px; }
.orient { left: 512px; top: 399px; width: 179px; height: 130px; }
.rdiff { left: 774px; top: 407px; width: 112px; height: 130px; }
.arrrec { left: 944px; top: 503px; width: 116px; height: 169px; }

.rectangle .out,
.evalsrf .out,
.hframe .out,
.rdiff .out {
    flex: none;
    width: 28px;
}

.orient .out {
    flex: none;
    width: 62px;
}

.crv {
    align-items: center;
    justify-content: center;
}

.slider {
    padding: 0;
}

.slider label {
    width: 94px;
    line-height: 37px;
    text-align: center;
    background: linear-gradient(#eee, #c8c9d0 9px, #a5a6b8 9px, #8f8d9c);
    border-right: 2px solid #3c3c3c;
    border-radius: 4px 0 0 4px;
}

.track {
    flex: 1;
    display: grid;
    place-items: center;
}

.track > * {
    grid-area: 1 / 1;
}

.track svg {
    margin-bottom: 10px;
}

.track output {
    font-size: 22px;
    justify-self: start;
    margin-left: 74px;
}

.track input {
    appearance: none;
    width: 214px;
    height: 16px;
}

.track input::-webkit-slider-thumb {
    appearance: none;
    width: 16px;
    height: 16px;
    background: #fff;
    border: 4px solid #000;
    border-radius: 50%;
}

/* yellow data panel */
.data-panel {
    position: absolute;
    left: 600px;
    top: 83px;
    width: 408px;
    height: 192px;
    padding: 2px;
    background: linear-gradient(90deg, transparent 14px, #d8d060 14px 15px, transparent 15px), #fff56e;
    border: 2px solid #2c2c2c;
    border-radius: 6px;
    box-shadow: 0 0 0 1px #f4f4f2;
    font: 16px/32px 'Liberation Mono', monospace;
    color: #111;
}

.data-panel .path {
    height: 31px;
    line-height: 28px;
    padding-right: 19px;
    text-align: right;
    background: rgba(190, 185, 60, .45);
}

.data-panel ol {
    list-style: none;
}

.data-panel li {
    display: flex;
    white-space: pre;
}

.data-panel li span {
    width: 13px;
    margin-right: 1px;
}

.data-panel li:nth-child(even) {
    background: rgba(220, 215, 100, .25);
}

.recent {
    position: absolute;
    left: 0;
    bottom: 0;
    height: 56px;
    width: 238px;
    padding-left: 3px;
    display: flex;
    align-items: center;
    gap: 14px;
    background: linear-gradient(#f4f4f4, #d4d4d4 38%, #b4b4b4 38%, #9c9c9c);
    border: 2px solid #000;
    border-left: none;
}

.recent .minus {
    width: 36px;
    height: 36px;
    margin-left: 4px;
    display: grid;
    place-items: center;
    background: linear-gradient(#fff, #d8d8d8);
    border: 2px solid #666;
    border-radius: 6px;
}

.recent .edge {
    align-self: stretch;
    margin-left: auto;
    width: 12px;
    background: rgba(0, 0, 0, .12);
}

.compass {
    position: absolute;
    right: 16px;
    bottom: 14px;
}

.gh-status {
    height: 46px;
    border-top: 2px solid #c4c4c4;
}
```
